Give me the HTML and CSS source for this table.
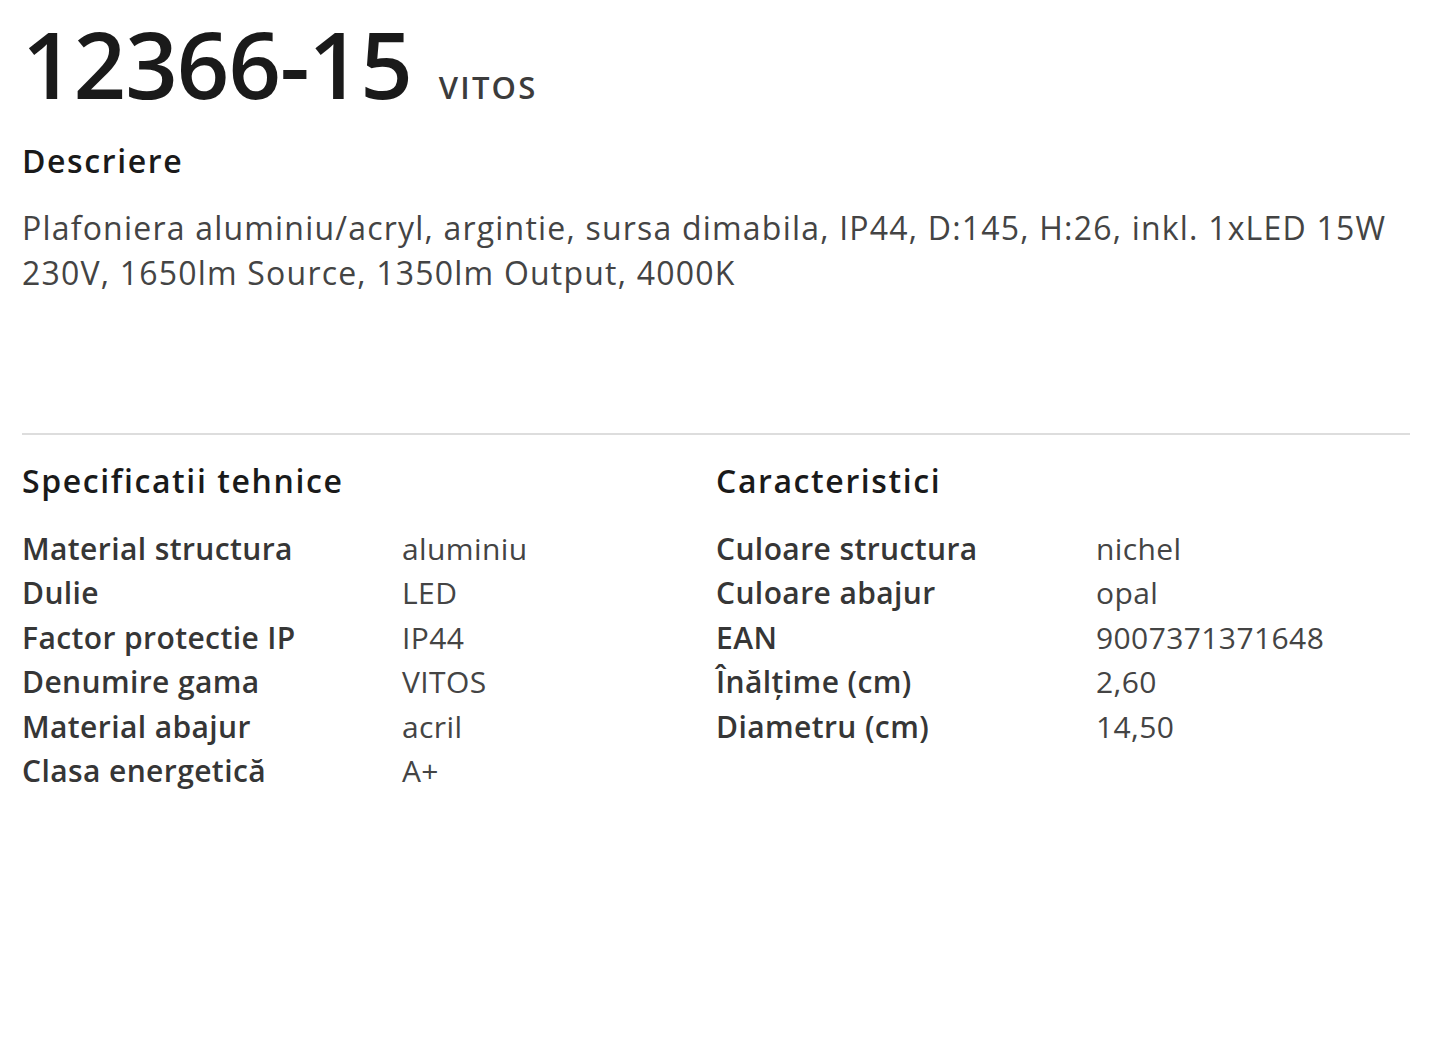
FILE: index.html
```html
<!DOCTYPE html>
<html lang="ro">
<head>
    <meta charset="UTF-8">
    <meta name="viewport" content="width=device-width, initial-scale=1.0">
    <title>12366-15 VITOS</title>
    <link rel="stylesheet" href="styles.css">
</head>
<body>
    <div class="product">
        <!-- Title -->
        <h1 class="product-title">12366-15 <span class="series">VITOS</span></h1>

        <!-- Description -->
        <h2 class="section-title section-title--first">Descriere</h2>
        <p class="description">
            Plafoniera aluminiu/acryl, argintie, sursa dimabila, IP44, D:145, H:26, inkl. 1xLED 15W 230V, 1650lm Source, 1350lm Output, 4000K
        </p>

        <hr class="divider">

        <!-- Specs -->
        <div class="specs">
            <div class="spec-col">
                <h3 class="section-title">Specificatii tehnice</h3>
                <dl class="spec-list">
                    <dt>Material structura</dt><dd>aluminiu</dd>
                    <dt>Dulie</dt><dd>LED</dd>
                    <dt>Factor protectie IP</dt><dd>IP44</dd>
                    <dt>Denumire gama</dt><dd>VITOS</dd>
                    <dt>Material abajur</dt><dd>acril</dd>
                    <dt>Clasa energetică</dt><dd>A+</dd>
                </dl>
            </div>
            <div class="spec-col">
                <h3 class="section-title">Caracteristici</h3>
                <dl class="spec-list">
                    <dt>Culoare structura</dt><dd>nichel</dd>
                    <dt>Culoare abajur</dt><dd>opal</dd>
                    <dt>EAN</dt><dd>9007371371648</dd>
                    <dt>Înălţime (cm)</dt><dd>2,60</dd>
                    <dt>Diametru (cm)</dt><dd>14,50</dd>
                </dl>
            </div>
        </div>
    </div>
</body>
</html>
```

FILE: styles.css
```css
/* Global */
body {
    margin: 0;
    background: #fff;
    font-family: "Open Sans", "Noto Sans", sans-serif;
    color: #444;
}

.product {
    padding: 14px 38px 0 22px;
}

/* Title */
.product-title {
    margin: 0;
    font-size: 92px;
    font-weight: 600;
    line-height: 100px;
    color: #1a1a1a;
    letter-spacing: -1px;
}

.series {
    font-size: 31px;
    font-weight: 600;
    color: #3c3c3c;
    letter-spacing: 2.2px;
    margin-left: 4px;
}

/* Section headings */
.section-title {
    margin: 24px 0 0;
    font-size: 32px;
    font-weight: 600;
    line-height: 44px;
    letter-spacing: 1.6px;
    color: #1a1a1a;
}

.section-title--first {
    margin-top: 2px;
}

/* Description */
.description {
    margin: 22px 0 0;
    font-size: 32px;
    line-height: 45px;
    letter-spacing: 1.2px;
    color: #444;
}

.divider {
    margin: 138px 0 0;
    border: 0;
    border-top: 2px solid #ddd;
}

/* Specs */
.specs {
    display: grid;
    grid-template-columns: 1fr 1fr;
}

.spec-list {
    display: grid;
    grid-template-columns: 380px 1fr;
    margin: 24px 0 0;
    font-size: 30px;
    line-height: 44.4px;
    letter-spacing: 0.4px;
}

.spec-list dt {
    font-weight: 600;
    color: #363636;
}

.spec-list dd {
    margin: 0;
    color: #444;
}
```
